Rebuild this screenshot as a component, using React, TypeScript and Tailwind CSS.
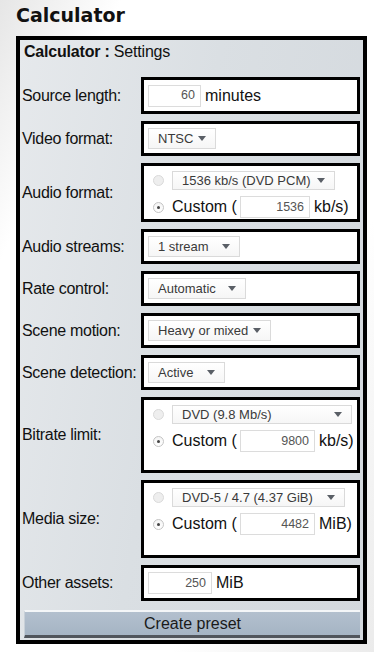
import React from 'react';

const Arrow: React.FC = () => (
  <svg width="8" height="5" viewBox="0 0 8 5" className="shrink-0">
    <polygon points="0,0 8,0 4,5" fill="#5a5f66" />
  </svg>
);

const Select: React.FC<{ value: string; className: string }> = ({ value, className }) => (
  <div
    className={`flex items-center justify-between border border-[#dadada] bg-gradient-to-b from-white to-[#f6f6f6] pl-[9px] pr-[9px] text-[13px] text-[#3a3a3a] ${className}`}
  >
    <span className="whitespace-nowrap">{value}</span>
    <Arrow />
  </div>
);

const NumInput: React.FC<{ value: string; className: string }> = ({ value, className }) => (
  <div
    className={`flex h-[22px] items-center justify-end border border-[#dcdcdc] bg-white pr-[5px] text-[12.5px] text-[#555] ${className}`}
  >
    {value}
  </div>
);

const Radio: React.FC<{ checked?: boolean }> = ({ checked }) =>
  checked ? (
    <div className="flex h-[11px] w-[11px] shrink-0 items-center justify-center rounded-full border border-[#c4c4c4] bg-gradient-to-b from-[#f4f4f4] to-white">
      <div className="h-[3px] w-[3px] rounded-full bg-[#444]" />
    </div>
  ) : (
    <div className="h-[11px] w-[11px] shrink-0 rounded-full border border-[#dadada] bg-[#eeeeee]" />
  );

const Row: React.FC<{ label: string; height: string; children: React.ReactNode }> = ({
  label,
  height,
  children,
}) => (
  <div className="flex items-stretch">
    <div className="flex w-[121px] items-center pl-[2px] text-[16px] tracking-[-0.3px] text-[#111] whitespace-nowrap">
      {label}
    </div>
    <div className={`w-[219px] border-[3px] border-black bg-white ${height}`}>{children}</div>
  </div>
);

const Simple: React.FC<{ children: React.ReactNode }> = ({ children }) => (
  <div className="flex h-full items-center gap-[4px] pl-[4px]">{children}</div>
);

const RadioGroup: React.FC<{
  preset: string;
  presetWidth: string;
  custom: string;
  inputWidth: string;
  unit: string;
}> = ({ preset, presetWidth, custom, inputWidth, unit }) => (
  <div className="flex flex-col gap-[5px] pl-[9px] pt-[5px]">
    <div className="flex items-center gap-[8px]">
      <Radio />
      <Select value={preset} className={`h-[19px] ${presetWidth}`} />
    </div>
    <div className="flex items-center gap-[8px]">
      <Radio checked />
      <div className="flex items-center text-[16px] text-[#111]">
        <span className="w-[68px] whitespace-nowrap">Custom (</span>
        <NumInput value={custom} className={inputWidth} />
        <span className="ml-[4px]">{unit}</span>
      </div>
    </div>
  </div>
);

export default function App() {
  return (
    <div className="min-h-[652px] w-[374px] bg-[linear-gradient(115deg,#e6e6e6_0%,#ffffff_18%,#ffffff_70%,#ebebeb_100%)] font-['Liberation_Sans',Arial,sans-serif]">
      <div className="h-[36px] pl-[16px] pt-[4px] font-['DejaVu_Sans',Verdana,sans-serif] text-[19px] font-bold leading-[22px] text-[#111]">
        Calculator
      </div>
      <div className="ml-[16px] w-[351px] border-4 border-black bg-[linear-gradient(100deg,#e6e9ec_0%,#dadfe3_45%,#d3d8dd_100%)]">
        <div className="h-[30px] pl-[4px] pt-[3px] text-[16px] leading-[18px] tracking-[-0.2px] text-[#111]">
          <span className="font-bold">Calculator :</span> Settings
        </div>
        <div className="mt-[7px] flex flex-col gap-[7px]">
          <Row label="Source length:" height="h-[37px]">
            <Simple>
              <NumInput value="60" className="w-[53px]" />
              <span className="text-[16px] text-[#111]">minutes</span>
            </Simple>
          </Row>
          <Row label="Video format:" height="h-[35px]">
            <Simple>
              <Select value="NTSC" className="h-[21px] w-[68px]" />
            </Simple>
          </Row>
          <Row label="Audio format:" height="h-[59px]">
            <RadioGroup
              preset="1536 kb/s (DVD PCM)"
              presetWidth="w-[163px]"
              custom="1536"
              inputWidth="w-[70px]"
              unit="kb/s)"
            />
          </Row>
          <Row label="Audio streams:" height="h-[35px]">
            <Simple>
              <Select value="1 stream" className="h-[21px] w-[92px]" />
            </Simple>
          </Row>
          <Row label="Rate control:" height="h-[35px]">
            <Simple>
              <Select value="Automatic" className="h-[21px] w-[98px]" />
            </Simple>
          </Row>
          <Row label="Scene motion:" height="h-[35px]">
            <Simple>
              <Select value="Heavy or mixed" className="h-[21px] w-[123px]" />
            </Simple>
          </Row>
          <Row label="Scene detection:" height="h-[35px]">
            <Simple>
              <Select value="Active" className="h-[21px] w-[77px]" />
            </Simple>
          </Row>
          <Row label="Bitrate limit:" height="h-[76px]">
            <RadioGroup
              preset="DVD (9.8 Mb/s)"
              presetWidth="w-[180px]"
              custom="9800"
              inputWidth="w-[75px]"
              unit="kb/s)"
            />
          </Row>
          <Row label="Media size:" height="h-[78px]">
            <RadioGroup
              preset="DVD-5 / 4.7 (4.37 GiB)"
              presetWidth="w-[173px]"
              custom="4482"
              inputWidth="w-[75px]"
              unit="MiB)"
            />
          </Row>
          <Row label="Other assets:" height="h-[36px]">
            <Simple>
              <NumInput value="250" className="w-[64px]" />
              <span className="text-[16px] text-[#111]">MiB</span>
            </Simple>
          </Row>
        </div>
        <div className="pb-[2px] pl-[4px] pr-[3px] pt-[9px]">
          <button className="flex h-[28px] w-full items-center justify-center border-b-[3px] border-l border-t-2 border-b-[#50555c] border-l-[#c8d0d8] border-t-[#f4f6f8] bg-gradient-to-b from-[#b3c0ce] to-[#a5b4c4] text-[16px] text-[#1a1a1a]">
            Create preset
          </button>
        </div>
      </div>
    </div>
  );
}
